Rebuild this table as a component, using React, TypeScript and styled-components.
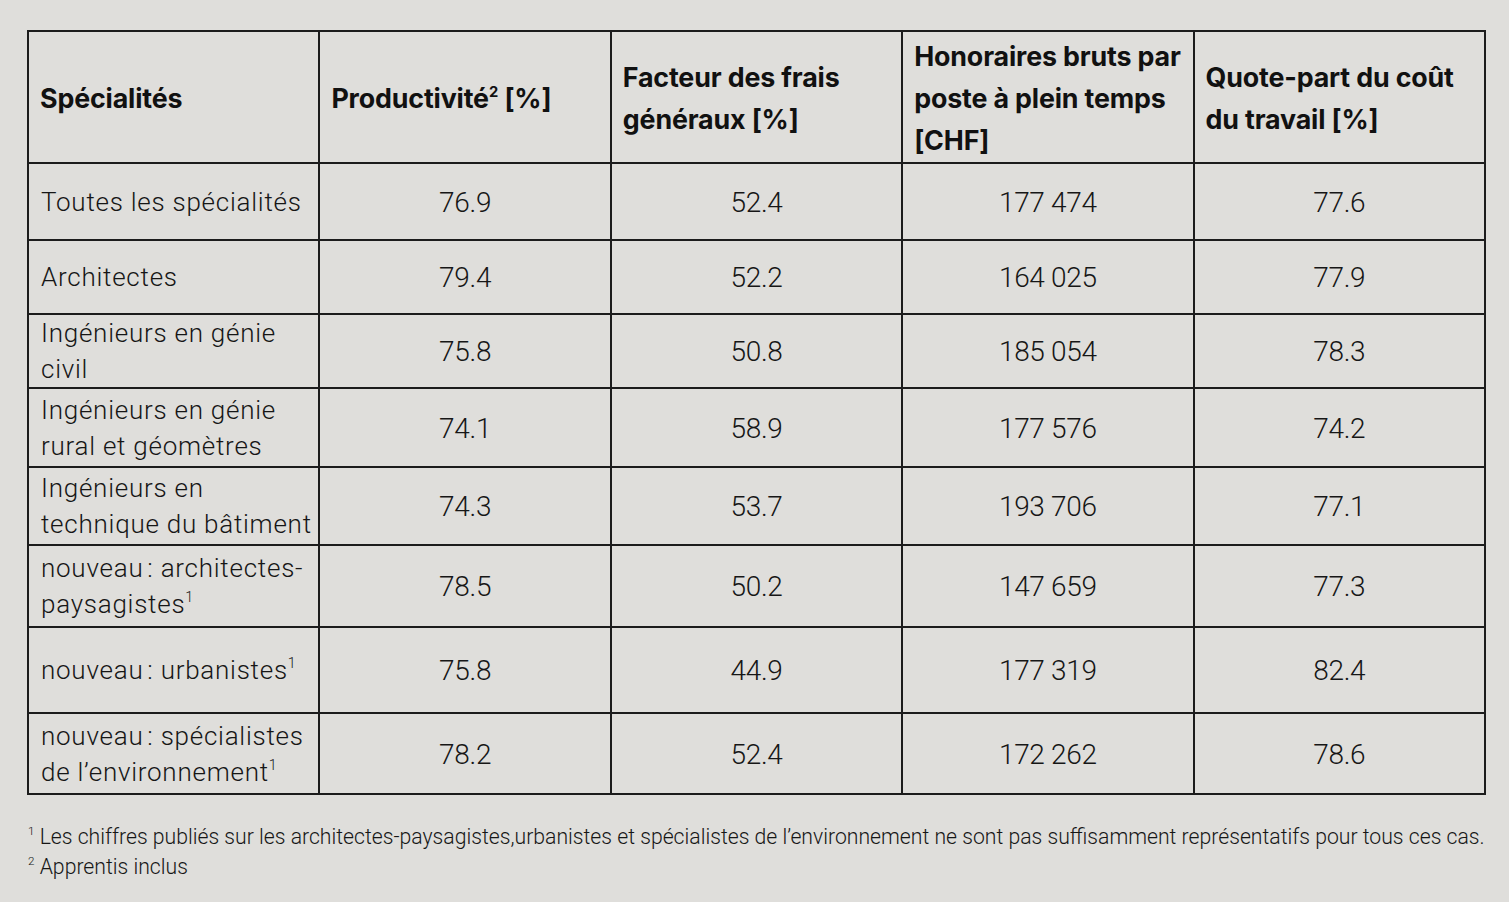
import React, { FC } from 'react';
import styled, { createGlobalStyle } from 'styled-components';

const GlobalStyle = createGlobalStyle`
	html, body {
		margin: 0;
		padding: 0;
		background: #dfdedb;
	}
	body {
		width: 1509px;
		height: 902px;
		overflow: hidden;
	}
`;

const Page = styled.div`
	padding: 30px 24px 0 27px;
	color: #161616;
`;

const Table = styled.table`
	width: 1459px;
	border-collapse: collapse;
	table-layout: fixed;
	border: 2px solid #1c1c1c;
`;

const HeadCell = styled.th`
	border: 2px solid #1c1c1c;
	padding: 1px 8px 0 11px;
	height: 129px;
	text-align: left;
	vertical-align: middle;
	font-family: Inter, 'Liberation Sans', sans-serif;
	font-weight: 700;
	font-size: 26.8px;
	line-height: 42px;
	letter-spacing: -0.15px;
	color: #111;
`;

const Row = styled.tr<{ $h: number }>`
	height: ${(p) => p.$h}px;
`;

const LabelCell = styled.td`
	border: 2px solid #1c1c1c;
	padding: 0 0 0 12px;
	vertical-align: middle;
	font-family: Roboto, 'Liberation Sans', sans-serif;
	font-weight: 300;
	font-size: 26px;
	line-height: 36px;
	letter-spacing: 0.75px;
`;

const ValueCell = styled(LabelCell)`
	text-align: center;
	padding: 2px 0 0 0;
	font-size: 28px;
	letter-spacing: -0.3px;
`;

const Sup = styled.sup`
	font-size: 0.55em;
	vertical-align: 0.75em;
	line-height: 0;
	letter-spacing: 0;
`;

const Notes = styled.div`
	margin-top: 27px;
	padding-left: 1px;
	width: 1480px;
	white-space: nowrap;
	font-family: Roboto, 'Liberation Sans', sans-serif;
	font-weight: 300;
	font-size: 21.2px;
	line-height: 30px;
	letter-spacing: 0;
`;

type Item = { label: React.ReactNode; values: string[]; h: number };

const rows: Item[] = [
	{ label: 'Toutes les spécialités', values: ['76.9', '52.4', '177 474', '77.6'], h: 77 },
	{ label: 'Architectes', values: ['79.4', '52.2', '164 025', '77.9'], h: 74 },
	{ label: 'Ingénieurs en génie civil', values: ['75.8', '50.8', '185 054', '78.3'], h: 74 },
	{ label: 'Ingénieurs en génie rural et géomètres', values: ['74.1', '58.9', '177 576', '74.2'], h: 79 },
	{ label: 'Ingénieurs en technique du bâtiment', values: ['74.3', '53.7', '193 706', '77.1'], h: 78 },
	{
		label: (
			<>
				nouveau{'\u202F'}: architectes-paysagistes<Sup>1</Sup>
			</>
		),
		values: ['78.5', '50.2', '147 659', '77.3'],
		h: 82,
	},
	{
		label: (
			<>
				nouveau{'\u202F'}: urbanistes<Sup>1</Sup>
			</>
		),
		values: ['75.8', '44.9', '177 319', '82.4'],
		h: 86,
	},
	{
		label: (
			<>
				nouveau{'\u202F'}: spécialistes de l’environnement<Sup>1</Sup>
			</>
		),
		values: ['78.2', '52.4', '172 262', '78.6'],
		h: 81,
	},
];

const App: FC = () => {
	return (
		<Page>
			<GlobalStyle />
			<Table>
				<thead>
					<tr>
						<HeadCell>Spécialités</HeadCell>
						<HeadCell>
							Productivité<Sup>2</Sup> [%]
						</HeadCell>
						<HeadCell>Facteur des frais généraux [%]</HeadCell>
						<HeadCell>Honoraires bruts par poste à plein temps [CHF]</HeadCell>
						<HeadCell>Quote-part du coût du travail [%]</HeadCell>
					</tr>
				</thead>
				<tbody>
					{rows.map((r, i) => (
						<Row key={i} $h={r.h}>
							<LabelCell>{r.label}</LabelCell>
							{r.values.map((v, j) => (
								<ValueCell key={j}>{v}</ValueCell>
							))}
						</Row>
					))}
				</tbody>
			</Table>
			<Notes>
				<div>
					<Sup>1</Sup> Les chiffres publiés sur les architectes-paysagistes,urbanistes et spécialistes de l’environnement ne sont pas suffisamment représentatifs pour tous ces cas.
				</div>
				<div>
					<Sup>2</Sup> Apprentis inclus
				</div>
			</Notes>
		</Page>
	);
};

export default App;
